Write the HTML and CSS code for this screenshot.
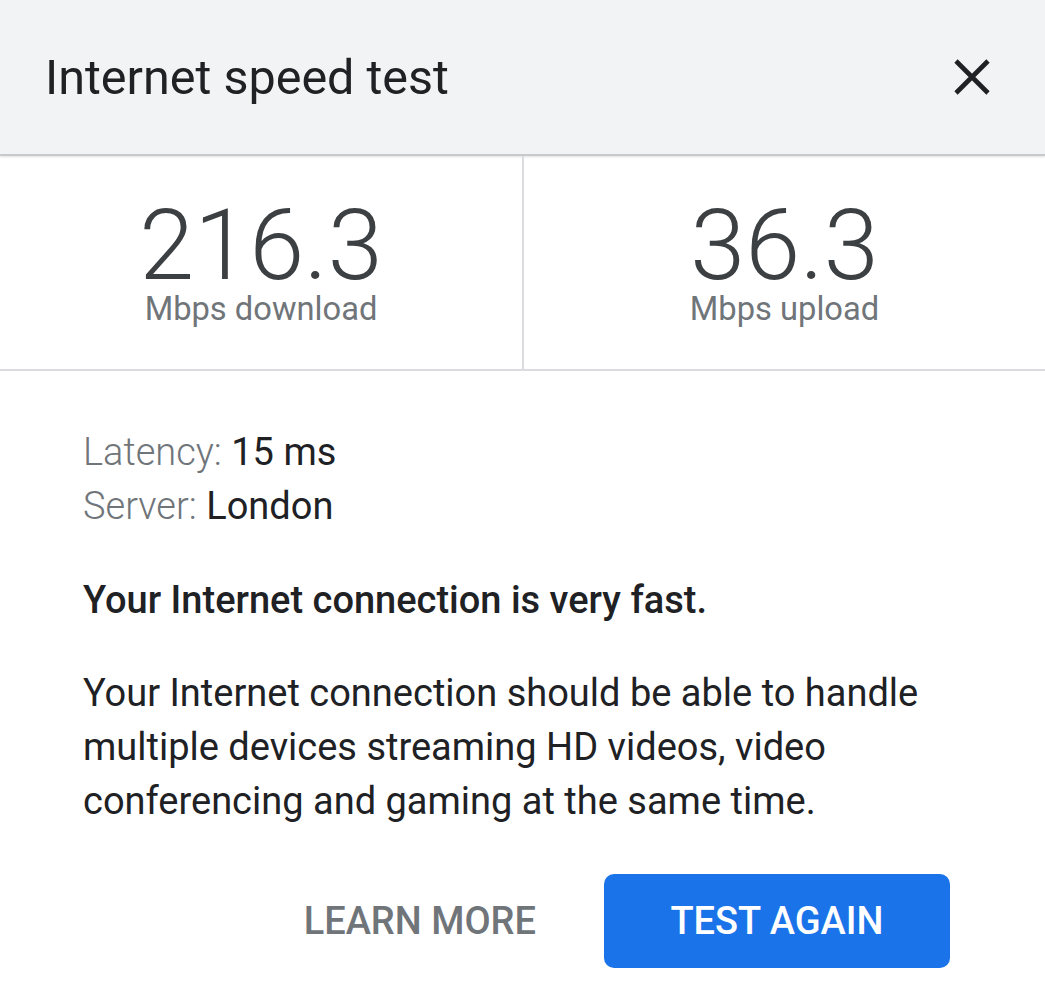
FILE: index.html
```html
<!DOCTYPE html>
<html lang="en">
<head>
  <meta charset="UTF-8">
  <title>Internet speed test</title>
  <link rel="stylesheet" href="styles.css">
</head>
<body>

  <div class="dialog">
    <div class="header">
      <h1>Internet speed test</h1>
      <button class="close" aria-label="Close">
        <svg width="38" height="38" viewBox="0 0 38 38">
          <path d="M3 3 L35 35 M35 3 L3 35" stroke="#202124" stroke-width="4.6" fill="none"/>
        </svg>
      </button>
    </div>

    <div class="stats">
      <div class="stat">
        <div class="num">216.3</div>
        <div class="unit">Mbps download</div>
      </div>
      <div class="stat">
        <div class="num">36.3</div>
        <div class="unit">Mbps upload</div>
      </div>
    </div>

    <div class="body">
      <div class="info">
        <div><span class="label">Latency:</span> 15 ms</div>
        <div><span class="label">Server:</span> London</div>
      </div>

      <p class="verdict">Your Internet connection is very fast.</p>

      <p class="desc">Your Internet connection should be able to handle multiple devices streaming HD videos, video conferencing and gaming at the same time.</p>

      <div class="actions">
        <button class="btn-text">Learn more</button>
        <button class="btn-main">Test again</button>
      </div>
    </div>
  </div>

</body>
</html>
```

FILE: styles.css
```css
:root {
  --gris-fons: #f1f3f4;
  --linia: #dadce0;
  --text: #202124;
  --text-2: #70757a;
  --num: #3c4043;
  --blau: #1a73e8;
}

body {
  margin: 0;
  background-color: white;
  font-family: Roboto, "Liberation Sans", sans-serif;
  color: var(--text);
}

.header {
  height: 154px;
  background-color: var(--gris-fons);
  border-bottom: 2px solid #c8c9cb;
  box-shadow: 0 1px 2px rgba(0, 0, 0, 0.12);
  display: flex;
  align-items: center;
  justify-content: space-between;
  padding: 0 54px 0 45px;
}

h1 {
  margin: 0;
  font-size: 48.5px;
  font-weight: 400;
  color: var(--text);
}

.close {
  background: none;
  border: 0;
  padding: 0;
  display: flex;
  cursor: pointer;
}

.stats {
  display: grid;
  grid-template-columns: 522px 1fr;
  height: 213px;
  border-bottom: 2px solid var(--linia);
}

.stat {
  display: flex;
  flex-direction: column;
  align-items: center;
  padding-top: 43px;
}

.stat + .stat {
  border-left: 2px solid var(--linia);
}

.num {
  font-size: 99px;
  font-weight: 300;
  line-height: 92px;
  color: var(--num);
}

.unit {
  font-size: 32.7px;
  line-height: 36px;
  color: var(--text-2);
}

.body {
  padding: 54px 83px 0;
  font-size: 38px;
  line-height: 54px;
}

.label {
  color: var(--text-2);
  font-weight: 300;
}

.verdict {
  margin: 40px 0 0;
  font-weight: 500;
}

.desc {
  margin: 39px 0 0;
}

.actions {
  display: flex;
  justify-content: flex-end;
  align-items: center;
  gap: 68px;
  margin-top: 46px;
  margin-right: 12px;
}

button {
  font-family: inherit;
}

.btn-text {
  background: none;
  border: 0;
  padding: 0;
  font-size: 38px;
  font-weight: 500;
  text-transform: uppercase;
  color: var(--text-2);
  cursor: pointer;
}

.btn-main {
  width: 346px;
  height: 94px;
  background-color: var(--blau);
  border: 0;
  border-radius: 10px;
  color: white;
  font-size: 38px;
  font-weight: 500;
  text-transform: uppercase;
  cursor: pointer;
}
```
